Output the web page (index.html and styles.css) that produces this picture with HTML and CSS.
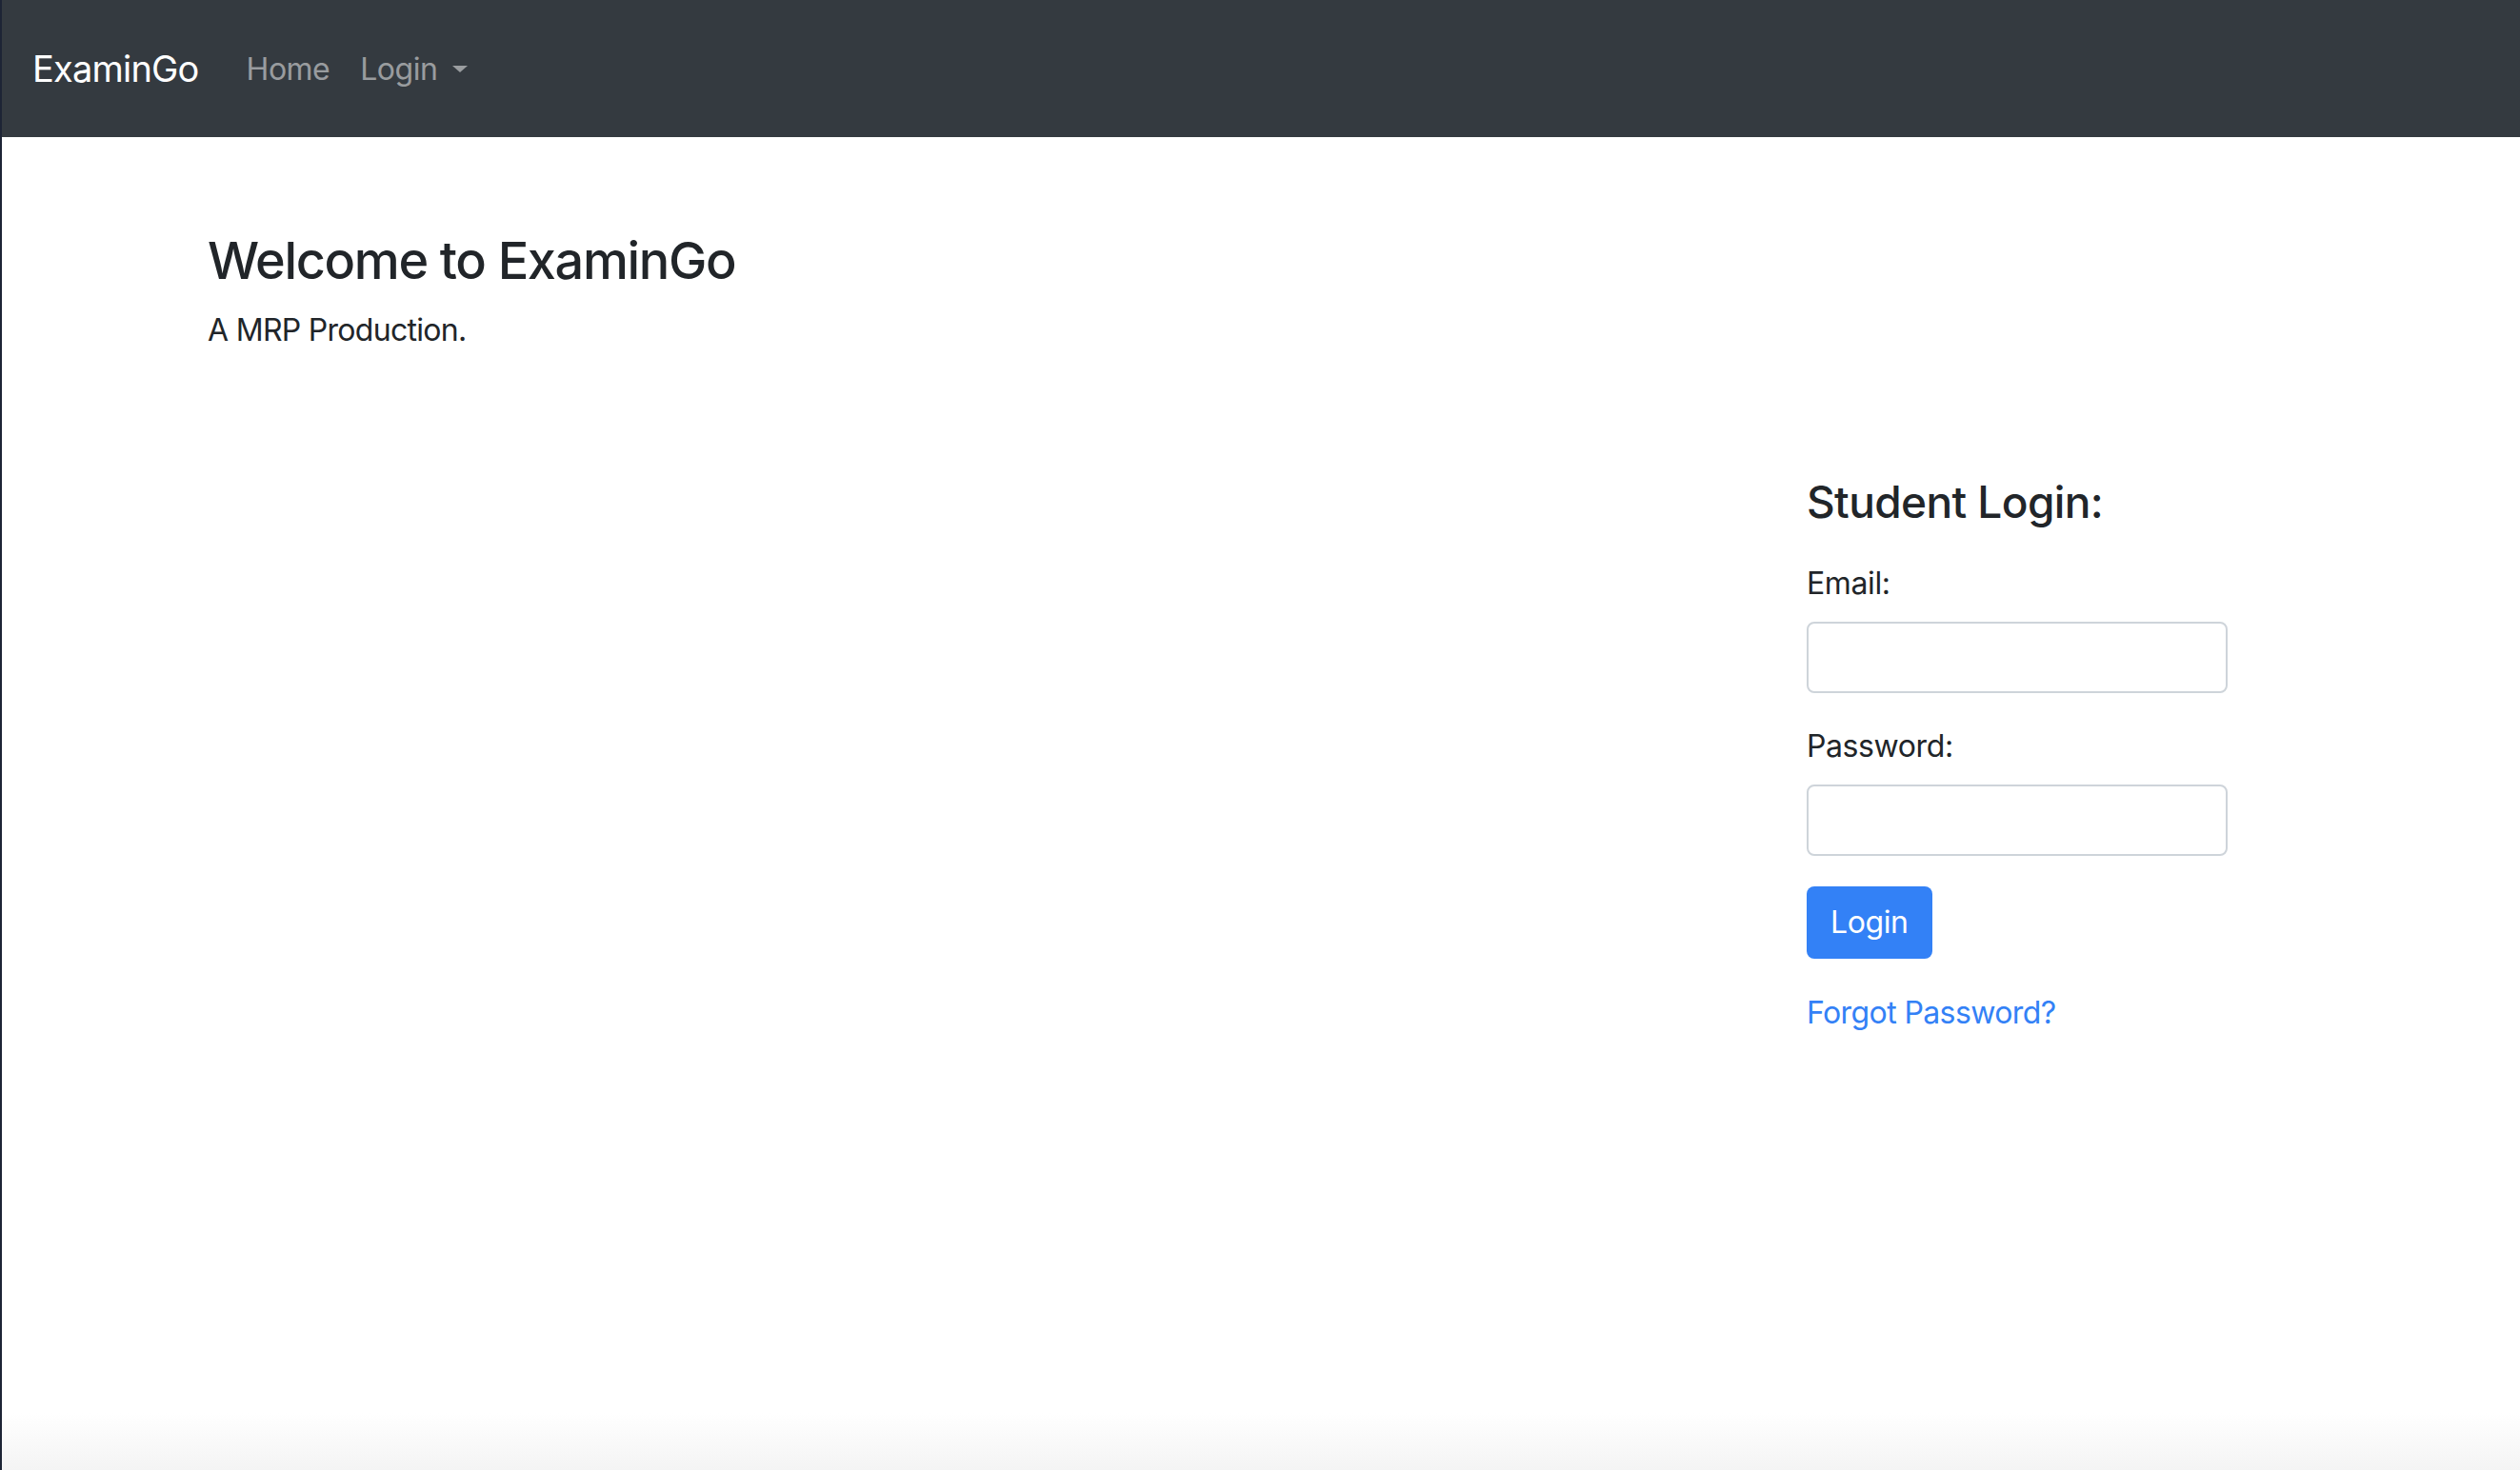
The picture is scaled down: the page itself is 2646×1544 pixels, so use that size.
FILE: index.html
```html
<!DOCTYPE html>
<html lang="en">
<head>
<meta charset="utf-8">
<title>ExaminGo</title>
<link rel="stylesheet" href="styles.css">
</head>
<body>
<nav class="navbar">
  <a class="brand" href="#">ExaminGo</a>
  <ul class="nav">
    <li><a class="nav-link" href="#">Home</a></li>
    <li><a class="nav-link dropdown" href="#">Login<span class="caret"></span></a></li>
  </ul>
</nav>
<main class="page">
  <section class="hero">
    <h1 class="title">Welcome to ExaminGo</h1>
    <p class="lead">A MRP Production.</p>
  </section>
  <section class="login-row">
    <form class="login">
      <h2 class="login-title">Student Login:</h2>
      <label class="label" for="email">Email:</label>
      <input class="field" id="email" type="email">
      <label class="label" for="password">Password:</label>
      <input class="field" id="password" type="password">
      <button class="btn" type="button">Login</button>
      <a class="forgot" href="#">Forgot Password?</a>
    </form>
  </section>
</main>
</body>
</html>
```
FILE: styles.css
```css
html, body {
  height: 100%;
}
body {
  margin: 0;
  border-left: 2px solid #1d2435;
  font-family: "Inter", "Liberation Sans", Arial, sans-serif;
  color: #212529;
  background: linear-gradient(to bottom, #ffffff calc(100% - 60px), #f4f4f4 100%);
  box-sizing: border-box;
}
.navbar {
  height: 144px;
  background: #343a40;
  display: flex;
  align-items: center;
  padding: 0 32px;
}
.brand {
  color: #ffffff;
  font-size: 38px;
  text-decoration: none;
  margin-right: 34px;
  letter-spacing: -0.8px;
}
.nav {
  display: flex;
  list-style: none;
  margin: 0;
  padding: 0;
}
.nav-link {
  display: flex;
  align-items: center;
  padding: 0 16px;
  font-size: 32px;
  color: rgba(255, 255, 255, 0.5);
  text-decoration: none;
  letter-spacing: -0.5px;
}
.caret {
  display: inline-block;
  margin-left: 16px;
  width: 0;
  height: 0;
  border-top: 7px solid rgba(255, 255, 255, 0.5);
  border-left: 8px solid transparent;
  border-right: 8px solid transparent;
}
.page {
  padding: 98px 0 0 216px;
}
.title {
  margin: 0 0 16px;
  font-size: 54px;
  font-weight: 500;
  line-height: 1.2;
  letter-spacing: -1.35px;
}
.lead {
  margin: 0;
  font-size: 32px;
  line-height: 1.5;
  letter-spacing: -0.7px;
}
.login-row {
  padding-left: 1679px;
  padding-top: 129px;
}
.login {
  display: flex;
  flex-direction: column;
  align-items: flex-start;
  width: 444px;
}
.login-title {
  margin: 0 0 34px;
  font-size: 46px;
  font-weight: 500;
  line-height: 1.2;
  letter-spacing: -0.6px;
}
.label {
  font-size: 32px;
  line-height: 1.5;
  margin-bottom: 16px;
  letter-spacing: -0.4px;
}
.field {
  box-sizing: border-box;
  width: 442px;
  height: 75px;
  margin: 0 0 32px;
  border: 2px solid #ced4da;
  border-radius: 8px;
  background: #ffffff;
  font-size: 32px;
}
.btn {
  height: 76px;
  padding: 0 25px;
  border: 0;
  border-radius: 8px;
  background: #3381f6;
  color: #ffffff;
  font-family: inherit;
  font-size: 32px;
  letter-spacing: -0.4px;
}
.forgot {
  margin-top: 33px;
  font-size: 32px;
  line-height: 1.5;
  color: #3381f6;
  text-decoration: none;
  letter-spacing: -0.6px;
}
```
